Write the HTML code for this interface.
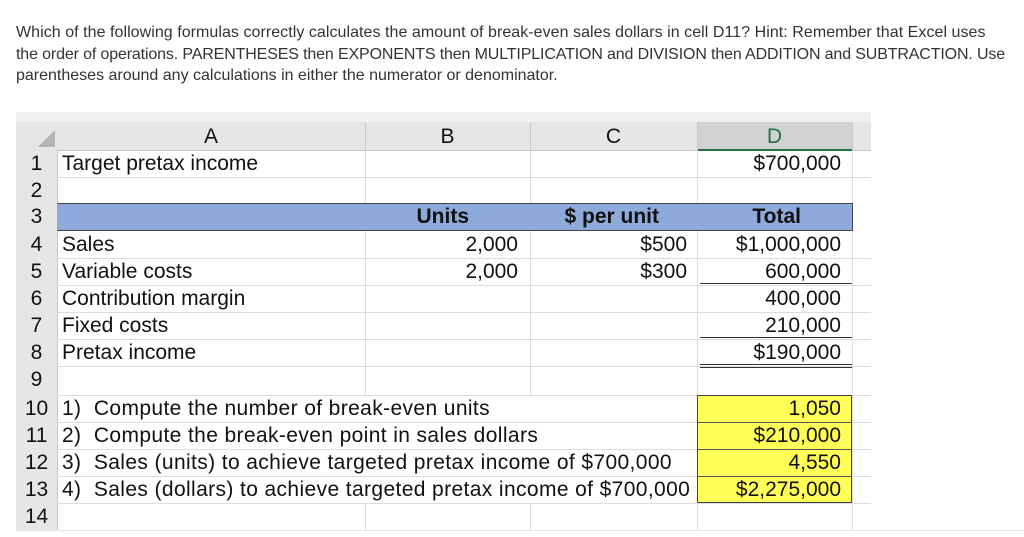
<!DOCTYPE html>
<html><head><meta charset="utf-8"><style>
body{margin:0;width:1024px;height:537px;background:#fff;position:relative;overflow:hidden;font-family:"Liberation Sans",sans-serif}
.q{position:absolute;left:16px;top:22px;width:1010px;font-size:16px;line-height:21.5px;color:#333;white-space:nowrap}
.s{position:absolute;font-size:21px;color:#111;white-space:nowrap;line-height:27px}
.lo{letter-spacing:0.38px}
.hl{position:absolute;height:1px;background:#dcdcdc}
.vl{position:absolute;width:1px;background:#dcdcdc}
.r{text-align:right}
.c{text-align:center}
</style></head><body>
<div class="q"><span style="letter-spacing:0.05px">Which of the following formulas correctly calculates the amount of break-even sales dollars in cell D11? Hint: Remember that Excel uses</span><br><span style="letter-spacing:-0.14px">the order of operations. PARENTHESES then EXPONENTS then MULTIPLICATION and DIVISION then ADDITION and SUBTRACTION. Use</span><br>parentheses around any calculations in either the numerator or denominator.</div>

<div style="position:absolute;left:16px;top:112px;width:855px;height:10px;background:#f0f0f0"></div>
<div style="position:absolute;left:16px;top:122px;width:855px;height:28px;background:#e6e6e6;border-bottom:1px solid #c8c8c8"></div>
<div style="position:absolute;left:16px;top:150px;width:41px;height:380px;background:#e6e6e6;border-right:1px solid #c8c8c8"></div>
<div style="position:absolute;left:697px;top:122px;width:155px;height:27px;background:#d2d2d2;border-bottom:2px solid #217346"></div>
<svg style="position:absolute;left:38px;top:130px" width="17" height="17"><polygon points="17,0 17,17 0,17" fill="#b4b4b4"/></svg>
<div class="vl" style="left:365px;top:122px;height:28px;background:#c8c8c8"></div>
<div class="vl" style="left:530px;top:122px;height:28px;background:#c8c8c8"></div>
<div class="vl" style="left:697px;top:122px;height:28px;background:#c8c8c8"></div>
<div class="vl" style="left:852px;top:122px;height:28px;background:#c8c8c8"></div>

<div class="s c" style="left:57px;width:308px;top:123px">A</div>
<div class="s c" style="left:365px;width:165px;top:123px">B</div>
<div class="s c" style="left:530px;width:167px;top:123px">C</div>
<div class="s c" style="left:697px;width:155px;top:123px;color:#217346">D</div>

<div class="hl" style="left:57px;width:814px;top:177px"></div>
<div class="hl" style="left:57px;width:814px;top:258px"></div>
<div class="hl" style="left:57px;width:814px;top:285px"></div>
<div class="hl" style="left:57px;width:814px;top:312px"></div>
<div class="hl" style="left:57px;width:814px;top:339px"></div>
<div class="hl" style="left:57px;width:814px;top:366px"></div>
<div class="hl" style="left:57px;width:814px;top:395px"></div>
<div class="hl" style="left:57px;width:814px;top:422px"></div>
<div class="hl" style="left:57px;width:814px;top:449px"></div>
<div class="hl" style="left:57px;width:814px;top:476px"></div>
<div class="hl" style="left:57px;width:814px;top:503px"></div>
<div class="vl" style="left:365px;top:150px;height:245px"></div>
<div class="vl" style="left:530px;top:150px;height:245px"></div>
<div class="vl" style="left:365px;top:503px;height:27px"></div>
<div class="vl" style="left:530px;top:503px;height:27px"></div>
<div class="vl" style="left:697px;top:150px;height:380px"></div>
<div class="vl" style="left:852px;top:150px;height:380px"></div>
<div style="position:absolute;left:16px;top:530px;width:1008px;height:1px;background:#e5e5e5"></div>

<div style="position:absolute;left:57px;top:203px;width:795px;height:26px;background:#8eaadb;border-top:1px solid #444;border-bottom:1px solid #444;border-right:1px solid #444"></div>
<div style="position:absolute;left:700px;top:283px;width:152px;height:1px;background:#333"></div>
<div style="position:absolute;left:700px;top:337px;width:152px;height:1px;background:#333"></div>
<div style="position:absolute;left:700px;top:364px;width:152px;height:4px;border-top:1px solid #333;border-bottom:1px solid #333;box-sizing:border-box"></div>
<div style="position:absolute;left:697px;top:395px;width:155px;height:108px;background:#ffff57;border:1px solid #444;box-sizing:border-box"></div>
<div style="position:absolute;left:697px;top:422px;width:155px;height:1px;background:#555"></div>
<div style="position:absolute;left:697px;top:449px;width:155px;height:1px;background:#555"></div>
<div style="position:absolute;left:697px;top:476px;width:155px;height:1px;background:#555"></div>

<div class="s c" style="left:16px;width:41px;top:150px">1</div>
<div class="s c" style="left:16px;width:41px;top:177px">2</div>
<div class="s c" style="left:16px;width:41px;top:203px">3</div>
<div class="s c" style="left:16px;width:41px;top:231px">4</div>
<div class="s c" style="left:16px;width:41px;top:258px">5</div>
<div class="s c" style="left:16px;width:41px;top:285px">6</div>
<div class="s c" style="left:16px;width:41px;top:312px">7</div>
<div class="s c" style="left:16px;width:41px;top:339px">8</div>
<div class="s c" style="left:16px;width:41px;top:366px">9</div>
<div class="s c" style="left:16px;width:41px;top:395px">10</div>
<div class="s c" style="left:16px;width:41px;top:422px">11</div>
<div class="s c" style="left:16px;width:41px;top:449px">12</div>
<div class="s c" style="left:16px;width:41px;top:476px">13</div>
<div class="s c" style="left:16px;width:41px;top:503px">14</div>

<div class="s" style="left:62px;top:150px">Target pretax income</div>
<div class="s" style="left:62px;top:231px">Sales</div>
<div class="s" style="left:62px;top:258px">Variable costs</div>
<div class="s" style="left:62px;top:285px">Contribution margin</div>
<div class="s" style="left:62px;top:312px">Fixed costs</div>
<div class="s" style="left:62px;top:339px">Pretax income</div>
<div class="s lo" style="left:62px;top:395px">1)&nbsp; Compute the number of break-even units</div>
<div class="s lo" style="left:62px;top:422px">2)&nbsp; Compute the break-even point in sales dollars</div>
<div class="s lo" style="left:62px;top:449px">3)&nbsp; Sales (units) to achieve targeted pretax income of $700,000</div>
<div class="s lo" style="left:62px;top:476px">4)&nbsp; Sales (dollars) to achieve targeted pretax income of $700,000</div>

<div class="s r" style="left:365px;width:104px;top:203px;font-weight:bold">Units</div>
<div class="s r" style="left:365px;width:153px;top:231px">2,000</div>
<div class="s r" style="left:365px;width:153px;top:258px">2,000</div>
<div class="s r" style="left:530px;width:129px;top:203px;font-weight:bold">$ per unit</div>
<div class="s r" style="left:530px;width:157px;top:231px">$500</div>
<div class="s r" style="left:530px;width:157px;top:258px">$300</div>
<div class="s r" style="left:697px;width:144px;top:150px">$700,000</div>
<div class="s r" style="left:697px;width:104px;top:203px;font-weight:bold">Total</div>
<div class="s r" style="left:697px;width:144px;top:231px">$1,000,000</div>
<div class="s r" style="left:697px;width:144px;top:258px">600,000</div>
<div class="s r" style="left:697px;width:144px;top:285px">400,000</div>
<div class="s r" style="left:697px;width:144px;top:312px">210,000</div>
<div class="s r" style="left:697px;width:144px;top:339px">$190,000</div>
<div class="s r" style="left:697px;width:144px;top:395px">1,050</div>
<div class="s r" style="left:697px;width:144px;top:422px">$210,000</div>
<div class="s r" style="left:697px;width:144px;top:449px">4,550</div>
<div class="s r" style="left:697px;width:144px;top:476px">$2,275,000</div>
</body></html>
